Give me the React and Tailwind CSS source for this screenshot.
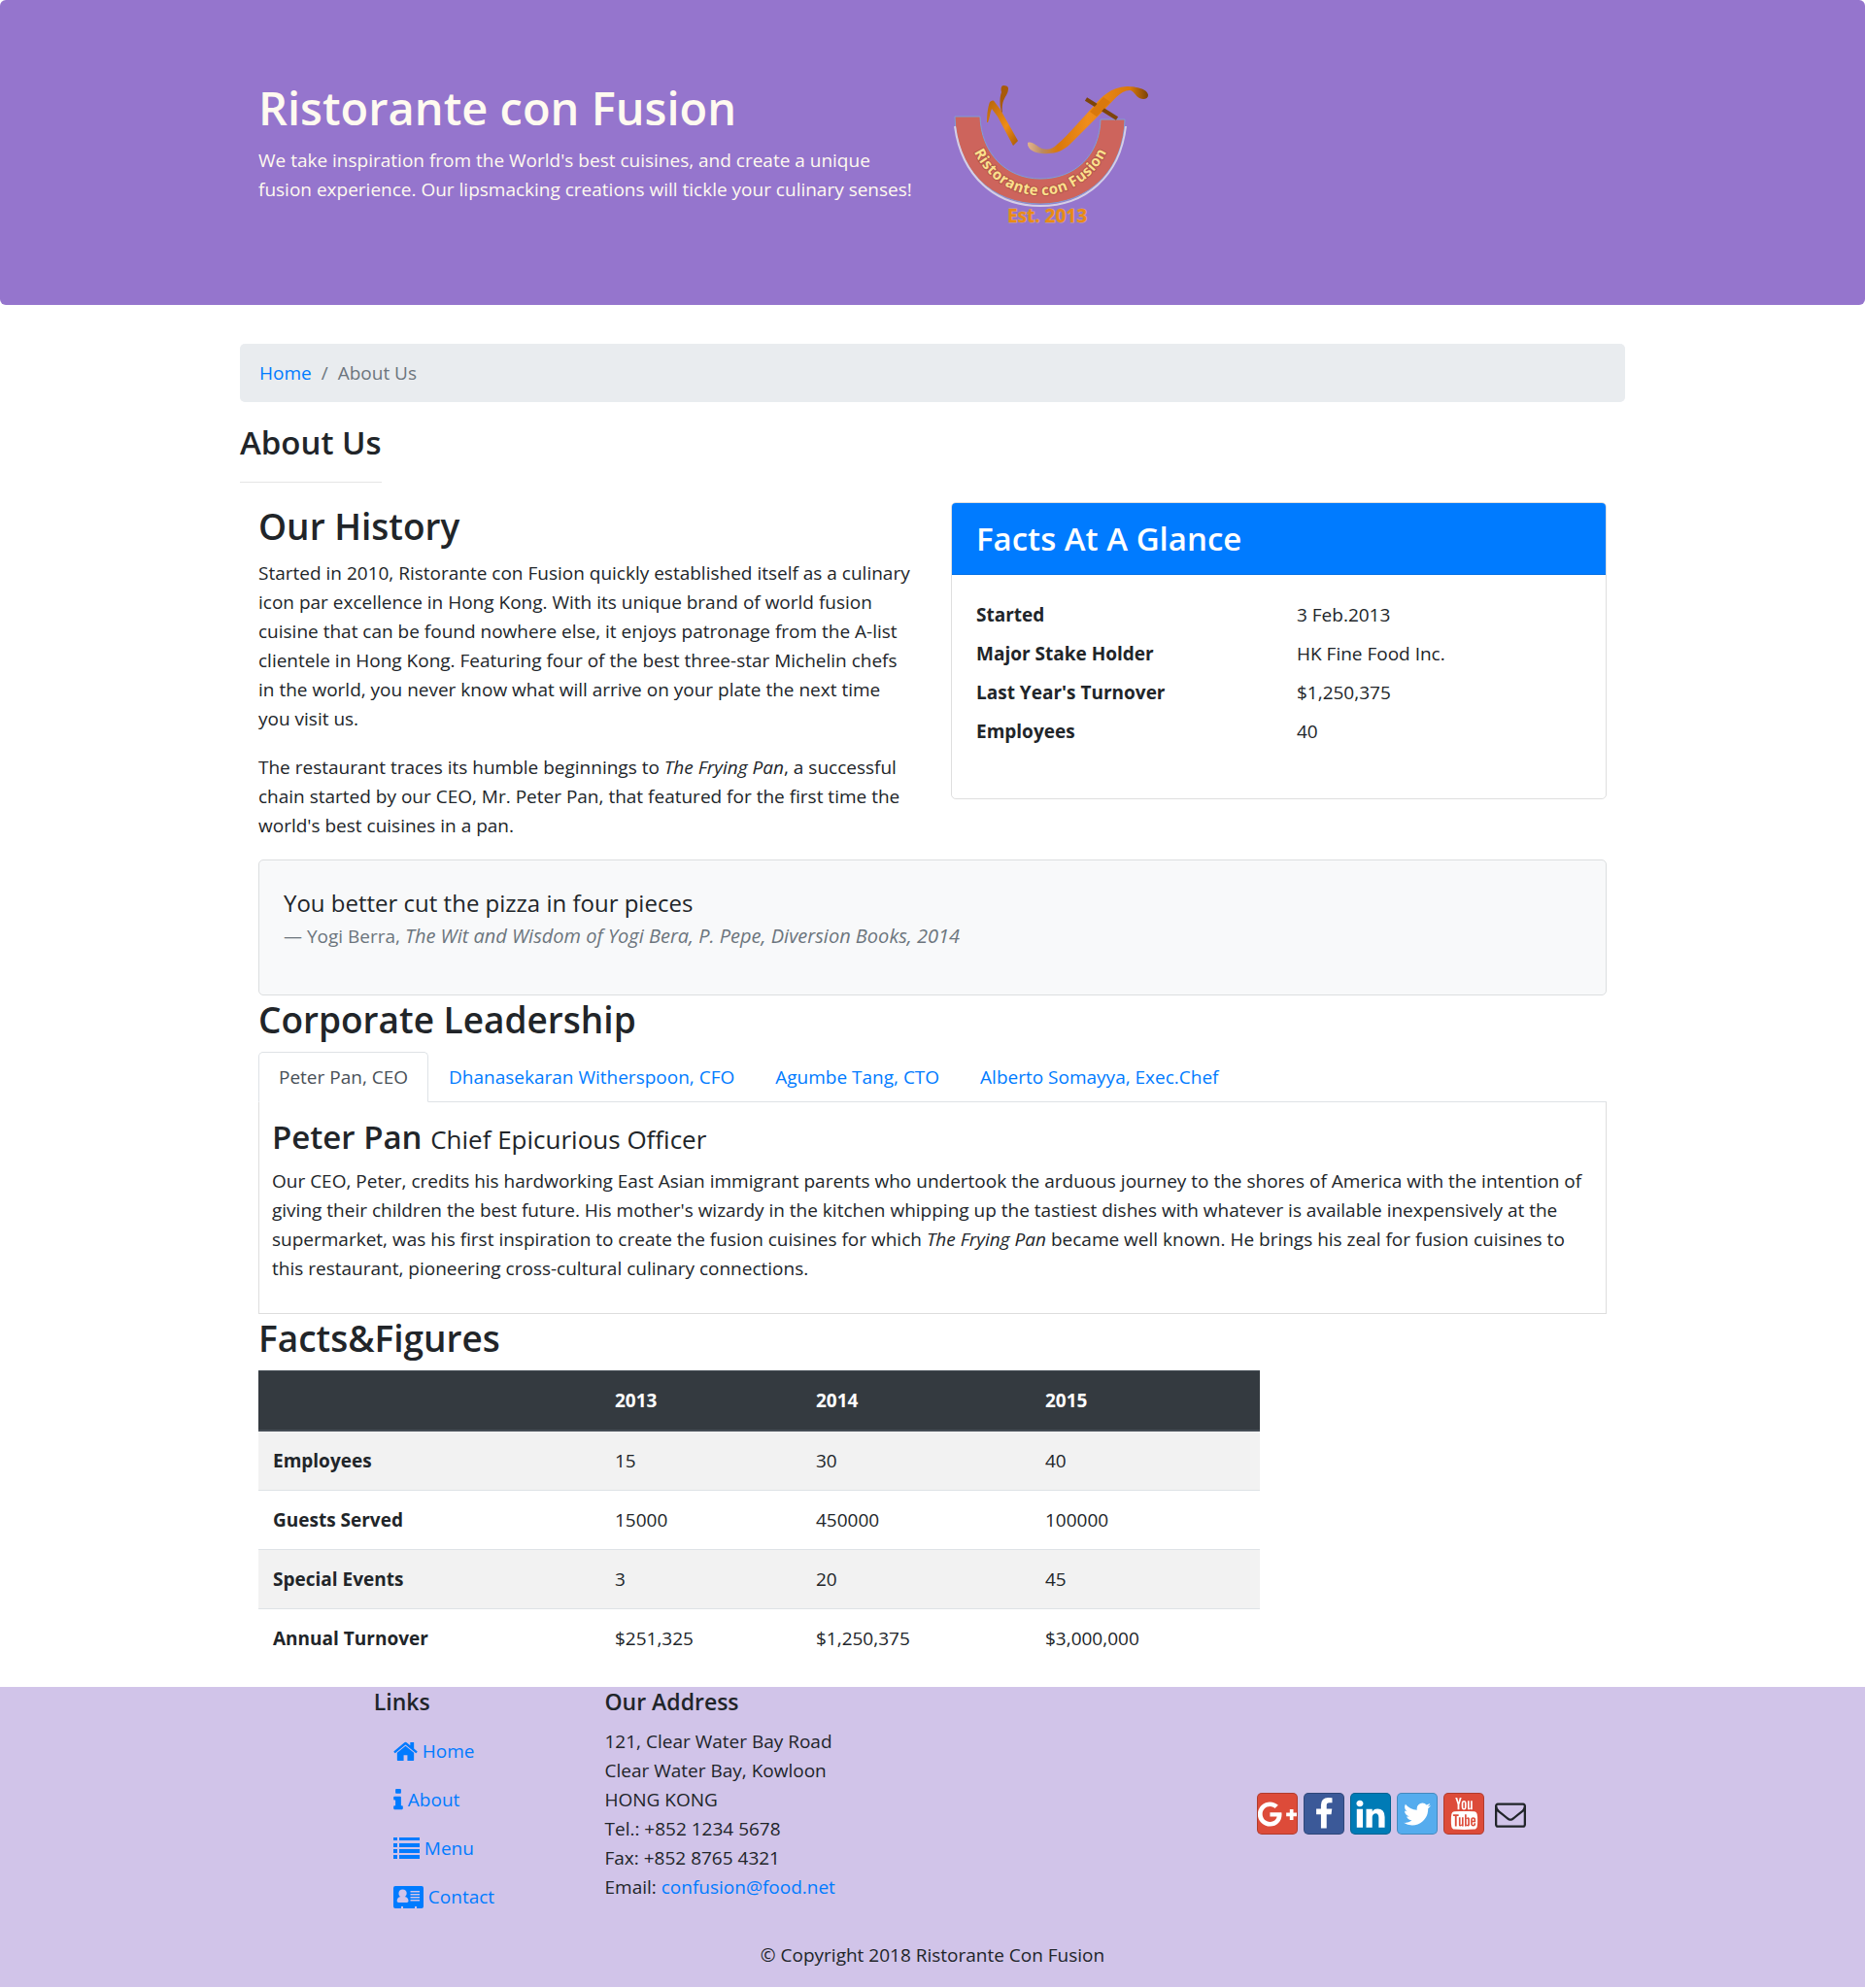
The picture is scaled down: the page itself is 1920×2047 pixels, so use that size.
import { useState } from "react";
import { FaGooglePlusG } from "react-icons/fa";
import { TfiYoutube } from "react-icons/tfi";

const leaders = [
  {
    tab: "Peter Pan, CEO",
    name: "Peter Pan",
    role: "Chief Epicurious Officer",
    bio: (
      <>
        Our CEO, Peter, credits his hardworking East Asian immigrant parents who undertook the arduous journey to the
        shores of America with the intention of giving their children the best future. His mother's wizardy in the
        kitchen whipping up the tastiest dishes with whatever is available inexpensively at the supermarket, was his
        first inspiration to create the fusion cuisines for which <em>The Frying Pan</em> became well known. He brings
        his zeal for fusion cuisines to this restaurant, pioneering cross-cultural culinary connections.
      </>
    ),
  },
  { tab: "Dhanasekaran Witherspoon, CFO", name: "Dhanasekaran Witherspoon", role: "Chief Food Officer", bio: null },
  { tab: "Agumbe Tang, CTO", name: "Agumbe Tang", role: "Chief Taste Officer", bio: null },
  { tab: "Alberto Somayya, Exec.Chef", name: "Alberto Somayya", role: "Executive Chef", bio: null },
];

const facts = [
  ["Started", "3 Feb.2013"],
  ["Major Stake Holder", "HK Fine Food Inc."],
  ["Last Year's Turnover", "$1,250,375"],
  ["Employees", "40"],
];

const figures = [
  ["Employees", "15", "30", "40"],
  ["Guests Served", "15000", "450000", "100000"],
  ["Special Events", "3", "20", "45"],
  ["Annual Turnover", "$251,325", "$1,250,375", "$3,000,000"],
];

function Logo() {
  return (
    <svg className="h-[154px] w-[206px] overflow-visible" viewBox="0 0 206 154" role="img" aria-label="Ristorante con Fusion logo">
      <defs>
        <linearGradient id="stroke-f" x1="0" y1="0" x2="1" y2="0">
          <stop offset="0" stopColor="#e3b48c" />
          <stop offset="0.12" stopColor="#b98a63" />
          <stop offset="0.25" stopColor="#d9780c" />
          <stop offset="0.5" stopColor="#f08d1a" />
          <stop offset="0.85" stopColor="#d9780c" />
          <stop offset="1" stopColor="#7a4206" />
        </linearGradient>
        <linearGradient id="stroke-r" x1="0" y1="0" x2="1" y2="1">
          <stop offset="0" stopColor="#b5650c" />
          <stop offset="0.6" stopColor="#ef8c18" />
          <stop offset="1" stopColor="#a85a06" />
        </linearGradient>
        <path id="arc-text" d="M20 41 A71 75 0 0 0 164 41" />
      </defs>
      <path
        d="M4 40 H30 C31 77 56 104 92 104 C128 104 153 80 154 43 H179 C178 95 142 130 92 130 C42 130 5 95 4 40 Z"
        fill="#cd645c"
        stroke="#7d9fd8"
        strokeWidth="1"
      />
      <path d="M4 50 C11 102 46 132 92 132 C138 132 174 102 180 50" fill="none" stroke="#d5cfe6" strokeWidth="2" />
      <path
        d="M37 46 C37 38 38 30 40 25 C42 23 44 23 45 25 L51 33 L69 65 L64 70 L48 40 L42 32 C40 36 40 42 38 46 Z"
        fill="url(#stroke-r)"
      />
      <path d="M52 35 C50 28 50 20 52 15 C51 11 52 8 54 8 C57 8 59 9 59 11 C59 14 58 16 57 18 C54 23 52 27 53 36 Z" fill="#a85a0a" />
      <path
        d="M79 67 C84 65 88 71 94 73 C100 75 105 73 109 69 C116 64 136 41 148 28 C155 20 164 10 181 9 C191 9 203 12 203 18 C203 22 198 23 194 21 C190 19 188 13 184 13 C174 13 166 25 158 33 L138 53 L123 68 C116 75 108 78 100 78 C91 79 78 76 79 67 Z"
        fill="url(#stroke-f)"
      />
      <path d="M139 22 L171 42" stroke="#7d4409" strokeWidth="4" />
      <path d="M143 35 L157 20 L164 25 L150 40 Z" fill="#d9780c" />
      <text
        className="font-['Open_Sans',sans-serif] text-[15px] font-bold"
        fill="#fbe08c"
        stroke="#8c3f2c"
        strokeWidth="2"
        paintOrder="stroke"
        strokeOpacity="0.4"
        textAnchor="middle"
      >
        <textPath href="#arc-text" startOffset="50%" dominantBaseline="middle">
          Ristorante con Fusion
        </textPath>
      </text>
      <text
        className="font-['Open_Sans',sans-serif] text-[19px] font-bold"
        x="99"
        y="149"
        fill="#e98a15"
        stroke="#c7a2a0"
        strokeWidth="1"
        paintOrder="stroke"
        textAnchor="middle"
      >
        Est. 2013
      </text>
    </svg>
  );
}

function HomeIcon() {
  return (
    <svg className="h-[27px] w-[25px] fill-current" viewBox="64 0 1664 1792" aria-hidden="true">
      <path d="M1472 992v480q0 26-19 45t-45 19h-384v-384h-256v384h-384q-26 0-45-19t-19-45v-480q0-1 .5-3t.5-3l575-474 575 474q1 2 1 6zm223-69l-62 74q-8 9-21 11h-3q-13 0-21-7l-692-577-692 577q-12 8-24 7-13-2-21-11l-62-74q-8-10-7-23.500t11-21.500l719-599q32-26 76-26t76 26l244 204v-195q0-14 9-23t23-9h192q14 0 23 9t9 23v408l219 182q10 8 11 21.500t-7 23.500z" />
    </svg>
  );
}

function InfoIcon() {
  return (
    <svg className="h-[27px] w-[10px] fill-current" viewBox="576 0 640 1792" aria-hidden="true">
      <path d="M1216 1344v128q0 26-19 45t-45 19h-512q-26 0-45-19t-19-45v-128q0-26 19-45t45-19h64v-384h-64q-26 0-45-19t-19-45v-128q0-26 19-45t45-19h384q26 0 45 19t19 45v576h64q26 0 45 19t19 45zm-128-1152v192q0 26-19 45t-45 19h-256q-26 0-45-19t-19-45v-192q0-26 19-45t45-19h256q26 0 45 19t19 45z" />
    </svg>
  );
}

function ListIcon() {
  return (
    <svg className="h-[22px] w-[27px] fill-current" viewBox="0 0 27 22" aria-hidden="true">
      <path d="M0 0h4v3h-4z M6 0h21v3h-21z M0 6h4v4h-4z M6 6h21v4h-21z M0 12h4v4h-4z M6 12h21v4h-21z M0 18h4v4h-4z M6 18h21v4h-21z" />
    </svg>
  );
}

function CardIcon() {
  return (
    <svg className="h-[24px] w-[31px] fill-current" viewBox="0 0 31 24" aria-hidden="true">
      <path
        fillRule="evenodd"
        d="M2 1h27a2 2 0 0 1 2 2v19a2 2 0 0 1-2 2h-5v-2h-2v2h-12v-2h-2v2h-6a2 2 0 0 1-2-2v-19a2 2 0 0 1 2-2zM9.500 4.500c-5.200 0-4.700 6.500-2.200 7.500-2.500.5-3.600 2-3.600 4.300 0 1 .7 1.700 1.700 1.700h8.500c1 0 1.600-.7 1.600-1.700 0-2.300-1.200-3.800-3.700-4.300 2.800-1.300 2.900-7.500-2.300-7.500zM17.500 6h9.500v1.500h-9.500zM17.500 9h9.500v1.500h-9.500zM17.500 12h9.500v1.500h-9.500zM17.500 15h9.500v1.500h-9.500z"
      />
    </svg>
  );
}

const links = [
  ["Home", HomeIcon],
  ["About", InfoIcon],
  ["Menu", ListIcon],
  ["Contact", CardIcon],
];

const socials = [
  { name: "Google+", tone: "bg-[#dd4b39]", icon: <FaGooglePlusG className="h-[42px] w-[42px] shrink-0" /> },
  {
    name: "Facebook",
    tone: "bg-[#3b5998]",
    icon: (
      <svg className="h-[34px] w-[34px] fill-current" viewBox="0 0 1792 1792" aria-hidden="true">
        <path d="M1343 12v264h-157q-86 0-116 36t-30 108v189h293l-39 296h-254v759h-306v-759h-255v-296h255v-218q0-186 104-288.500t277-102.500q147 0 228 12z" />
      </svg>
    ),
  },
  {
    name: "LinkedIn",
    tone: "bg-[#007bb6]",
    icon: (
      <svg className="h-[34px] w-[34px] fill-current" viewBox="0 0 1792 1792" aria-hidden="true">
        <path d="M477 625v991h-330v-991h330zm21-306q1 73-50.500 122t-135.500 49h-2q-82 0-132-49t-50-122q0-74 51.500-122.500t134.500-48.500 133 48.500 51 122.500zm1166 729v568h-329v-530q0-105-40.500-164.500t-126.500-59.500q-63 0-105.500 34.500t-63.500 85.500q-11 30-11 81v553h-329q2-399 2-647t-1-296l-1-48h329v144h-2q20-32 41-56t56.500-52 87-43.500 114.500-15.500q171 0 275 113.500t104 332.500z" />
      </svg>
    ),
  },
  {
    name: "Twitter",
    tone: "bg-[#55acee]",
    icon: (
      <svg className="h-[32px] w-[32px] fill-current" viewBox="0 0 1792 1792" aria-hidden="true">
        <path d="M1684 408q-67 98-162 167 1 14 1 42 0 130-38 259.500t-115.500 248.500-184.500 210.500-258 146-323 54.500q-271 0-496-145 35 4 78 4 225 0 401-138-105-2-188-64.500t-114-159.500q33 5 61 5 43 0 85-11-112-23-185.500-111.500t-73.500-205.500v-4q68 38 146 41-66-44-105-115t-39-154q0-88 44-163 121 149 294.500 238.500t371.500 99.500q-8-38-8-74 0-134 94.500-228.500t228.500-94.500q140 0 236 102 109-21 205-78-37 115-142 178 93-10 186-50z" />
      </svg>
    ),
  },
  { name: "YouTube", tone: "bg-[#dd4b39]", icon: <TfiYoutube className="h-[33px] w-[33px]" /> },
];

const h2 = "mb-[8px] text-[37px] leading-[50px] font-semibold";
const h3 = "text-[33px] leading-[44px] font-semibold";
const h5 = "mb-[10px] text-[23px] leading-[31px] font-semibold";

export default function App() {
  const [active, setActive] = useState(0);
  const leader = leaders[active];

  return (
    <div className="bg-white font-['Open_Sans',sans-serif] text-[19px] leading-[30px] text-[#212529]">
      <header className="mb-[40px] rounded-[6px] bg-[#9575cd] py-[80px] text-[#fffaf0]">
        <div className="mx-auto grid max-w-[1426px] grid-cols-2">
          <div className="px-[19px]">
            <h1 className="mb-[8px] text-[47px] leading-[62px] font-semibold">Ristorante con Fusion</h1>
            <p>
              We take inspiration from the World's best cuisines, and create a unique fusion experience. Our lipsmacking
              creations will tickle your culinary senses!
            </p>
          </div>
          <div className="px-[19px]">
            <Logo />
          </div>
        </div>
      </header>

      <main className="mx-auto max-w-[1426px]">
        <nav aria-label="breadcrumb">
          <ol className="mb-[20px] flex gap-[10px] rounded-[5px] bg-[#e9ecef] px-[20px] py-[15px] text-[#6c757d]">
            <li>
              <a href="#home" className="text-[#007bff]">Home</a>
            </li>
            <li aria-hidden="true">/</li>
            <li aria-current="page">About Us</li>
          </ol>
        </nav>
        <h3 className={`mb-[20px] w-fit border-b border-black/10 pb-[18px] ${h3}`}>About Us</h3>

        <div className="grid grid-cols-2">
          <section className="px-[19px]">
            <h2 className={h2}>Our History</h2>
            <p className="mb-[20px]">
              Started in 2010, Ristorante con Fusion quickly established itself as a culinary icon par excellence in
              Hong Kong. With its unique brand of world fusion cuisine that can be found nowhere else, it enjoys
              patronage from the A-list clientele in Hong Kong. Featuring four of the best three-star Michelin chefs in
              the world, you never know what will arrive on your plate the next time you visit us.
            </p>
            <p className="mb-[20px]">
              The restaurant traces its humble beginnings to <em>The Frying Pan</em>, a successful chain started by our
              CEO, Mr. Peter Pan, that featured for the first time the world's best cuisines in a pan.
            </p>
          </section>
          <section className="px-[19px]">
            <div className="overflow-hidden rounded-[5px] border border-[#dfdfdf]">
              <h3 className={`border-b border-[#006fe6] bg-[#007bff] px-[25px] pt-[15px] pb-[14px] text-white ${h3}`}>
                Facts At A Glance
              </h3>
              <dl className="grid grid-cols-[330px_1fr] gap-y-[10px] px-[25px] pt-[26px] pb-[54px]">
                {facts.map(([term, value]) => (
                  <div key={term} className="contents">
                    <dt className="font-bold">{term}</dt>
                    <dd>{value}</dd>
                  </div>
                ))}
              </dl>
            </div>
          </section>
        </div>

        <div className="px-[19px]">
          <blockquote className="rounded-[5px] border border-[#dcdee0] bg-[#f8f9fa] px-[25px] pt-[25px] pb-[45px]">
            <p className="text-[24px] leading-[38px]">You better cut the pizza in four pieces</p>
            <footer className="text-[#6c757d]">
              — Yogi Berra,{" "}
              <cite className="text-[20px]">The Wit and Wisdom of Yogi Bera, P. Pepe, Diversion Books, 2014</cite>
            </footer>
          </blockquote>

          <h2 className={h2}>Corporate Leadership</h2>
          <div role="tablist" className="flex border-b border-[#dee2e6]">
            {leaders.map((item, index) => (
              <button
                key={item.tab}
                type="button"
                role="tab"
                aria-selected={index === active}
                onClick={() => setActive(index)}
                className={`-mb-px rounded-t-[5px] border px-[20px] py-[10px] ${
                  index === active
                    ? "border-[#dee2e6] border-b-white bg-white text-[#495057]"
                    : "border-transparent text-[#007bff]"
                }`}
              >
                {item.tab}
              </button>
            ))}
          </div>
          <div role="tabpanel" className="border border-t-0 border-[#dddddd] px-[13px] pt-[14px] pb-[31px]">
            <h3 className={`mb-[6px] ${h3}`}>
              {leader.name} <small className="text-[26px] font-normal">{leader.role}</small>
            </h3>
            <p>{leader.bio}</p>
          </div>

          <h2 className={h2}>Facts&amp;Figures</h2>
          <table className="mb-[20px] w-[1031px] table-fixed border-collapse text-left">
            <colgroup>
              <col className="w-[352px]" />
              <col className="w-[207px]" />
              <col className="w-[236px]" />
              <col />
            </colgroup>
            <thead className="bg-[#343a40] text-white">
              <tr className="border-t border-b-2 border-[#454d55]">
                <td className="p-[15px]" />
                {["2013", "2014", "2015"].map((year) => (
                  <th key={year} scope="col" className="p-[15px] font-bold">{year}</th>
                ))}
              </tr>
            </thead>
            <tbody>
              {figures.map(([label, ...values]) => (
                <tr key={label} className="border-t border-[#dee2e6] odd:bg-[#f2f2f2] first:border-t-0">
                  <th scope="row" className="p-[15px] font-bold">{label}</th>
                  {values.map((value) => (
                    <td key={value} className="p-[15px]">{value}</td>
                  ))}
                </tr>
              ))}
            </tbody>
          </table>
        </div>
      </main>

      <footer className="bg-[#d1c4e9] pb-[18px]">
        <div className="mx-auto grid max-w-[1426px] grid-cols-12">
          <div className="col-span-2 col-start-2 mb-[20px] px-[19px]">
            <h5 className={h5}>Links</h5>
            <ul className="px-[20px]">
              {links.map(([label, Icon]) => (
                <li key={label} className="py-[10px]">
                  <a href={`#${label.toLowerCase()}`} className="flex items-center gap-[5px] text-[#007bff]">
                    <Icon /> {label}
                  </a>
                </li>
              ))}
            </ul>
          </div>
          <div className="col-span-5 px-[19px]">
            <h5 className={h5}>Our Address</h5>
            <address className="not-italic">
              121, Clear Water Bay Road
              <br />
              Clear Water Bay, Kowloon
              <br />
              HONG KONG
              <br />
              Tel.: +852 1234 5678
              <br />
              Fax: +852 8765 4321
              <br />
              Email: <a href="mailto:confusion@food.net" className="text-[#007bff]">confusion@food.net</a>
            </address>
          </div>
          <div className="col-span-4 flex items-center justify-center gap-[6px]">
            {socials.map(({ name, tone, icon }) => (
              <a
                key={name}
                href={`#${name.toLowerCase()}`}
                aria-label={name}
                className={`flex h-[43px] w-[42px] items-center justify-center overflow-hidden rounded-[5px] border border-black/20 text-white ${tone}`}
              >
                {icon}
              </a>
            ))}
            <a href="mailto:confusion@food.net" aria-label="Email" className="flex w-[42px] justify-center">
              <svg className="h-[32px] w-[32px] fill-current" viewBox="0 0 1792 1792" aria-hidden="true">
                <path d="M1664 1504v-768q-32 36-69 66-268 206-426 338-51 43-83 67t-86.500 48.500-102.500 24.500h-2q-48 0-102.500-24.500t-86.500-48.500-83-67q-158-132-426-338-37-30-69-66v768q0 13 9.500 22.500t22.500 9.500h1472q13 0 22.500-9.500t9.500-22.500zm0-1051v-24.500l-.5-13-3-12.500-5.500-9-9-7.500-14-2.500h-1472q-13 0-22.500 9.500t-9.500 22.500q0 168 147 284 193 152 401 317 6 5 35 29.500t46 37.500 44.500 31.500 50.500 27.500 43 9h2q20 0 43-9t50.500-27.500 44.500-31.500 46-37.500 35-29.500q208-165 401-317 54-43 100.500-115.500t46.500-131.500zm128-37v1088q0 66-47 113t-113 47h-1472q-66 0-113-47t-47-113v-1088q0-66 47-113t113-47h1472q66 0 113 47t47 113z" />
              </svg>
            </a>
          </div>
        </div>
        <p className="text-center">© Copyright 2018 Ristorante Con Fusion</p>
      </footer>
    </div>
  );
}
